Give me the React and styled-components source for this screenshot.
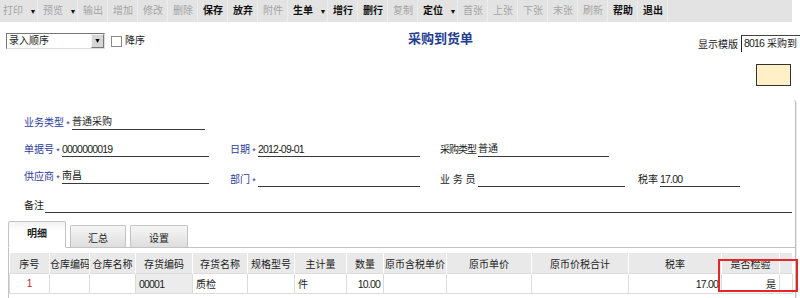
import React from 'react';
import styled, { createGlobalStyle } from 'styled-components';

const BLUE = '#2e3b9c';

const GlobalStyle = createGlobalStyle`
  html, body { margin: 0; padding: 0; background: #fff; }
  body {
    width: 800px;
    height: 298px;
    overflow: hidden;
    font-family: "Liberation Sans", "Noto Sans CJK SC", sans-serif;
    font-size: 10px;
    color: #222;
  }
`;

const Page = styled.div`
  position: relative;
  width: 800px;
  height: 298px;
  overflow: hidden;
`;

/* toolbar */
const Toolbar = styled.div`
  display: flex;
  align-items: center;
  width: 792px;
  height: 22px;
  background: #e3e3e3;
  overflow: hidden;
  & > :first-child { margin-left: -2px; }
`;

const ToolItem = styled.div`
  display: flex;
  align-items: center;
  height: 22px;
  box-shadow: inset -1px 0 0 #ededed;
`;

const ToolButton = styled.span`
  width: 30px;
  text-align: center;
  line-height: 22px;
  white-space: nowrap;
  color: ${p => (p.$enabled ? '#111' : '#a3a3a3')};
  font-weight: ${p => (p.$enabled ? 700 : 400)};
`;

const DropArrow = styled.span`
  width: 10px;
  text-align: center;
  font-size: 7px;
  color: #111;
`;

/* header row */
const HeaderRow = styled.div`
  display: flex;
  align-items: flex-start;
  height: 40px;
`;

const OrderGroup = styled.div`
  display: flex;
  align-items: center;
  width: 402px;
  padding-left: 6px;
  margin-top: 11px;
`;

const SelectBox = styled.div`
  display: flex;
  box-sizing: border-box;
  width: 99px;
  height: 16px;
  border: 1px solid #777;
  border-right-color: #ddd;
  border-bottom-color: #ddd;
  background: #fff;
`;

const SelectText = styled.span`
  flex: 1;
  padding-left: 2px;
  line-height: 14px;
`;

const SelectButton = styled.span`
  width: 13px;
  height: 14px;
  box-sizing: border-box;
  border: 1px solid #f4f4f4;
  border-right-color: #777;
  border-bottom-color: #777;
  background: #d6d6d6;
  font-size: 7px;
  line-height: 12px;
  text-align: center;
  color: #000;
`;

const CheckBox = styled.span`
  width: 9px;
  height: 9px;
  margin-left: 6px;
  border: 1px solid #888;
  background: #fff;
`;

const CheckLabel = styled.span`
  margin-left: 3px;
  line-height: 14px;
`;

const Title = styled.h1`
  margin: 10px 0 0;
  font-size: 13px;
  line-height: 14px;
  font-weight: 700;
  color: #1f3d8f;
  white-space: nowrap;
`;

const TemplateGroup = styled.div`
  display: flex;
  align-items: center;
  margin-left: auto;
  margin-top: 13px;
`;

const TemplateLabel = styled.span`
  margin-right: 3px;
  white-space: nowrap;
`;

const TemplateInput = styled.div`
  width: 59px;
  height: 17px;
  box-sizing: border-box;
  border-top: 1px solid #444;
  border-left: 1px solid #222;
  padding-left: 2px;
  line-height: 15px;
  white-space: nowrap;
  overflow: hidden;
`;

const NoteRow = styled.div`
  display: flex;
  height: 38px;
`;

const YellowBox = styled.div`
  width: 35px;
  height: 22px;
  box-sizing: border-box;
  margin: 2px 9px 0 auto;
  border: 1px solid #333;
  background: #fff0c8;
`;

/* form panel */
const Panel = styled.div`
  width: 795px;
  height: 198px;
  padding-top: 3px;
  border-right: 1px solid #bdbdbd;
  box-shadow: 1px 0 0 #ececec;
  border-top-right-radius: 3px;
`;

const FormRow = styled.div`
  display: grid;
  grid-template-columns: 206px 210px 198px 1fr;
  align-items: end;
  height: ${p => p.$h}px;
  padding-left: 24px;
`;

const Field = styled.div`
  display: flex;
  align-items: flex-end;
  grid-column: ${p => p.$col || 'auto'};
  margin-bottom: ${p => p.$raise || 0}px;
`;

const Label = styled.span`
  flex: none;
  width: ${p => (p.$w ? `${p.$w}px` : 'auto')};
  margin-right: ${p => p.$gap || 0}px;
  letter-spacing: ${p => (p.$tight ? '-1px' : 'normal')};
  line-height: 14px;
  white-space: nowrap;
  color: ${p => (p.$required ? BLUE : '#222')};
`;

const Star = styled.span`
  flex: none;
  width: 8px;
  text-align: center;
  line-height: 12px;
  font-size: 9px;
  color: ${BLUE};
`;

const Line = styled.div`
  width: ${p => (p.$w ? `${p.$w}px` : 'auto')};
  flex: ${p => (p.$w ? 'none' : '1')};
  margin-right: ${p => p.$mr || 0}px;
  height: 14px;
  line-height: 14px;
  border-bottom: 1px solid #3a3a3a;
  white-space: nowrap;
  color: #222;
`;

const Num = styled.span`
  font-size: 10.5px;
  letter-spacing: -0.8px;
`;

/* tabs */
const TabBar = styled.div`
  display: flex;
  align-items: flex-end;
  gap: 4px;
  height: 26px;
  margin-top: 8px;
  padding-left: 8px;
`;

const Tab = styled.div`
  position: relative;
  z-index: ${p => (p.$active ? 1 : 0)};
  box-sizing: border-box;
  width: ${p => p.$w}px;
  height: ${p => (p.$active ? 27 : 22)}px;
  margin-bottom: ${p => (p.$active ? -1 : 0)}px;
  padding-top: ${p => (p.$active ? 5 : 6)}px;
  border: 1px solid #c3c3c3;
  border-bottom: ${p => (p.$active ? '1px solid #fff' : 'none')};
  border-radius: 2px 2px 0 0;
  background: ${p => (p.$active
    ? 'linear-gradient(#f3f3f3, #fff 40%)'
    : 'linear-gradient(#f6f6f6, #dedede)')};
  text-align: center;
  line-height: 14px;
  font-weight: ${p => (p.$active ? 700 : 400)};
  color: #222;
`;

const TablePanel = styled.div`
  margin-left: 8px;
  padding-top: 5px;
  height: 60px;
  border-top: 1px solid #c3c3c3;
  border-left: 1px solid #c3c3c3;
`;

const Grid = styled.table`
  width: 783px;
  border-collapse: collapse;
  table-layout: fixed;
`;

const Th = styled.th`
  height: 20px;
  padding: 0;
  background: #e9e9e9;
  border-right: 1px solid #fff;
  font-weight: 400;
  text-align: center;
  white-space: nowrap;
  overflow: hidden;
  color: #222;
`;

const Td = styled.td`
  height: 19px;
  padding: 0 3px;
  border: 1px solid #dcdcdc;
  background: ${p => p.$bg || '#fff'};
  text-align: ${p => p.$align || 'left'};
  color: ${p => p.$color || '#222'};
  white-space: nowrap;
  overflow: hidden;
`;

const Highlight = styled.div`
  position: absolute;
  left: 718px;
  top: 259px;
  width: 80px;
  height: 33px;
  box-sizing: border-box;
  border: 2px solid #e32626;
`;

const tools = [
  { label: '打印', menu: true },
  { label: '预览', menu: true },
  { label: '输出' },
  { label: '增加' },
  { label: '修改' },
  { label: '删除' },
  { label: '保存', on: true },
  { label: '放弃', on: true },
  { label: '附件' },
  { label: '生单', on: true, menu: true },
  { label: '增行', on: true },
  { label: '删行', on: true },
  { label: '复制' },
  { label: '定位', on: true, menu: true },
  { label: '首张' },
  { label: '上张' },
  { label: '下张' },
  { label: '末张' },
  { label: '刷新' },
  { label: '帮助', on: true },
  { label: '退出', on: true },
];

const columns = [
  ['序号', 40], ['仓库编码', 40], ['仓库名称', 46], ['存货编码', 57],
  ['存货名称', 55], ['规格型号', 47], ['主计量', 52], ['数量', 37],
  ['原币含税单价', 63], ['原币单价', 85], ['原币价税合计', 97], ['税率', 93],
  ['是否检验', 58], ['', 13],
];

export default function App() {
  return (
    <Page>
      <GlobalStyle />
      <Toolbar>
        {tools.map(t => (
          <ToolItem key={t.label}>
            <ToolButton $enabled={t.on}>{t.label}</ToolButton>
            {t.menu && <DropArrow>▼</DropArrow>}
          </ToolItem>
        ))}
      </Toolbar>

      <HeaderRow>
        <OrderGroup>
          <SelectBox>
            <SelectText>录入顺序</SelectText>
            <SelectButton>▼</SelectButton>
          </SelectBox>
          <CheckBox />
          <CheckLabel>降序</CheckLabel>
        </OrderGroup>
        <Title>采购到货单</Title>
        <TemplateGroup>
          <TemplateLabel>显示模版</TemplateLabel>
          <TemplateInput><Num>8016</Num> 采购到</TemplateInput>
        </TemplateGroup>
      </HeaderRow>

      <NoteRow>
        <YellowBox />
      </NoteRow>

      <Panel>
        <FormRow $h={27}>
          <Field>
            <Label $required>业务类型</Label><Star>*</Star>
            <Line $w={133}>普通采购</Line>
          </Field>
        </FormRow>
        <FormRow $h={27}>
          <Field>
            <Label $required>单据号</Label><Star>*</Star>
            <Line $w={147}><Num>0000000019</Num></Line>
          </Field>
          <Field>
            <Label $required>日期</Label><Star>*</Star>
            <Line $w={162}><Num>2012-09-01</Num></Line>
          </Field>
          <Field>
            <Label $w={38} $tight>采购类型</Label>
            <Line $w={131}>普通</Line>
          </Field>
        </FormRow>
        <FormRow $h={30}>
          <Field $raise={3}>
            <Label $required>供应商</Label><Star>*</Star>
            <Line $w={147}>南昌</Line>
          </Field>
          <Field>
            <Label $required>部门</Label><Star>*</Star>
            <Line $w={162} />
          </Field>
          <Field>
            <Label $w={38}>业 务 员</Label>
            <Line $w={147} />
          </Field>
          <Field>
            <Label $gap={2}>税率</Label>
            <Line $w={80}><Num>17.00</Num></Line>
          </Field>
        </FormRow>
        <FormRow $h={26}>
          <Field $col="1 / -1">
            <Label $gap={1}>备注</Label>
            <Line $mr={3} />
          </Field>
        </FormRow>

        <TabBar>
          <Tab $active $w={58}>明细</Tab>
          <Tab $w={56}>汇总</Tab>
          <Tab $w={58}>设置</Tab>
        </TabBar>

        <TablePanel>
          <Grid>
            <colgroup>
              {columns.map(([, w], i) => <col key={i} style={{ width: w }} />)}
            </colgroup>
            <thead>
              <tr>
                {columns.map(([name], i) => <Th key={i}>{name}</Th>)}
              </tr>
            </thead>
            <tbody>
              <tr>
                <Td $align="center" $color="#c81e1e">1</Td>
                <Td />
                <Td />
                <Td $bg="#ececec"><Num>00001</Num></Td>
                <Td>质检</Td>
                <Td />
                <Td>件</Td>
                <Td $align="right"><Num>10.00</Num></Td>
                <Td />
                <Td />
                <Td />
                <Td $align="right"><Num>17.00</Num></Td>
                <Td $align="right">是</Td>
                <Td />
              </tr>
            </tbody>
          </Grid>
        </TablePanel>
      </Panel>

      <Highlight />
    </Page>
  );
}
